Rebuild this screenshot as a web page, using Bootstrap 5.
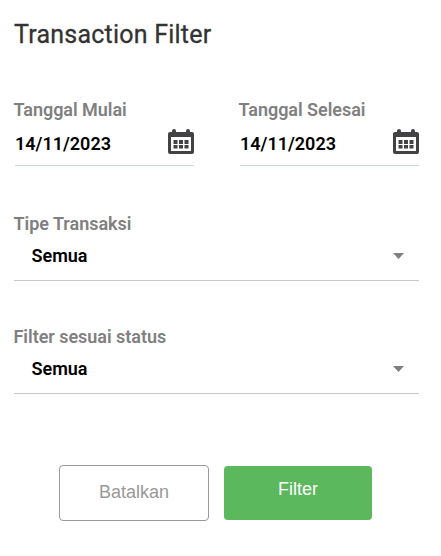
<!DOCTYPE html>
<html lang="id">
<head>
<meta charset="utf-8">
<meta name="viewport" content="width=device-width, initial-scale=1">
<title>Transaction Filter</title>
<link rel="stylesheet" href="https://cdn.jsdelivr.net/npm/bootstrap@5.3.0/dist/css/bootstrap.min.css">
<style>
body{font-family:Roboto,sans-serif;color:#000;background:#fff}
.filter-panel{padding:20px 22px 0 14px}
.panel-title{font-size:25px;line-height:30px;font-weight:400;letter-spacing:.22px;-webkit-text-stroke:.3px #333;color:#333;margin-bottom:50px}
.field-label{display:block;font-size:18px;line-height:20px;font-weight:600;letter-spacing:-.03px;color:#808080;white-space:nowrap;margin-left:-.5px}
.field-value{font-size:18px;line-height:20px;font-weight:600;padding-left:.5px}
.dates{gap:45px;margin-bottom:48px}
.date-field{width:180px}
.date-box{height:46px;margin-left:1px;border-bottom:1px solid #cfd8d8;padding-bottom:10px}
.date-box .field-value{margin-bottom:1px;padding-left:0}
.select-box{height:47px;border-bottom:1px solid #c8c8c8;padding:0 15px 14px 17px}
.select-arrow{margin-bottom:7px}
.type-field{margin-bottom:46px}
.status-field{margin-bottom:71px}
.actions{gap:15px;padding-left:45px}
.actions .btn{font-family:"Liberation Sans",Arial,sans-serif;font-size:18px;line-height:20px;border-radius:4px}
.btn-cancel{width:150px;height:56px;border:1px solid #999;color:#999;padding-bottom:8px}
.btn-apply{width:148px;height:54px;background:#5cb85c;color:#fff;border:0;padding-bottom:14px}
</style>
</head>
<body>
<main class="filter-panel">
<h1 class="panel-title">Transaction Filter</h1>
<form>
<div class="d-flex dates">
<div class="date-field">
<label class="field-label">Tanggal Mulai</label>
<div class="date-box d-flex align-items-end justify-content-between"><span class="field-value">14/11/2023</span>
<svg width="26" height="26" viewBox="0 0 26 26"><path fill="#424244" fill-rule="evenodd" d="M4 3V2a2 2 0 0 1 4 0v1h10V2a2 2 0 0 1 4 0v1h2a2 2 0 0 1 2 2v18a2 2 0 0 1-2 2H2a2 2 0 0 1-2-2V5a2 2 0 0 1 2-2zM3 8v14h20V8z"/><path fill="#424244" d="M5.500 11h4v4h-4zM11 11h4v4h-4zM16.500 11h4v4h-4zM5.500 16h4v3.500h-4zM11 16h4v3.500h-4zM16.500 16h4v3.500h-4z"/></svg></div>
</div>
<div class="date-field">
<label class="field-label">Tanggal Selesai</label>
<div class="date-box d-flex align-items-end justify-content-between"><span class="field-value">14/11/2023</span>
<svg width="26" height="26" viewBox="0 0 26 26"><path fill="#424244" fill-rule="evenodd" d="M4 3V2a2 2 0 0 1 4 0v1h10V2a2 2 0 0 1 4 0v1h2a2 2 0 0 1 2 2v18a2 2 0 0 1-2 2H2a2 2 0 0 1-2-2V5a2 2 0 0 1 2-2zM3 8v14h20V8z"/><path fill="#424244" d="M5.500 11h4v4h-4zM11 11h4v4h-4zM16.500 11h4v4h-4zM5.500 16h4v3.500h-4zM11 16h4v3.500h-4zM16.500 16h4v3.500h-4z"/></svg></div>
</div>
</div>
<div class="type-field">
<label class="field-label">Tipe Transaksi</label>
<div class="select-box d-flex align-items-end justify-content-between"><span class="field-value">Semua</span>
<svg class="select-arrow" width="11" height="6" viewBox="0 0 11 6"><path fill="#808080" d="M0 0h11L5.500 6z"/></svg></div>
</div>
<div class="status-field">
<label class="field-label">Filter sesuai status</label>
<div class="select-box d-flex align-items-end justify-content-between"><span class="field-value">Semua</span>
<svg class="select-arrow" width="11" height="6" viewBox="0 0 11 6"><path fill="#808080" d="M0 0h11L5.500 6z"/></svg></div>
</div>
<div class="d-flex align-items-center actions">
<button type="button" class="btn btn-cancel">Batalkan</button>
<button type="button" class="btn btn-apply">Filter</button>
</div>
</form>
</main>
<script src="https://cdn.jsdelivr.net/npm/bootstrap@5.3.0/dist/js/bootstrap.bundle.min.js"></script>
</body>
</html>
